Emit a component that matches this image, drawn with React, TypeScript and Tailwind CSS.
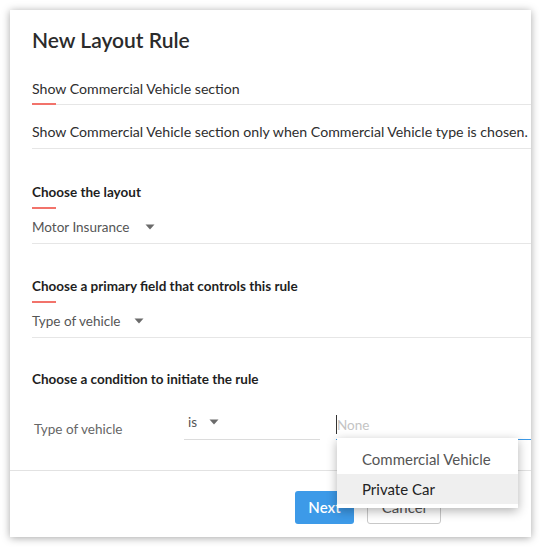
import React from "react";

const Caret = ({ ml = "ml-[15px]" }: { ml?: string }) => (
  <svg width="10" height="6" viewBox="0 0 10 6" className={`${ml} shrink-0`}>
    <path d="M0.5 0.5 H9.5 L5 5.5 Z" fill="#6b6b6b" />
  </svg>
);

const FieldLine = ({ red = true }: { red?: boolean }) => (
  <div className="flex items-end h-[2px]">
    {red && <div className="w-6 h-[2px] bg-[#f2736b]" />}
    <div className="flex-1 h-px bg-[#e6e6e6]" />
  </div>
);

const Heading = ({ children, mt }: { children: React.ReactNode; mt: string }) => (
  <div className={mt}>
    <div className="text-[13.5px] leading-5 font-bold text-[#1f1f1f]">{children}</div>
    <div className="mt-[5px] w-6 h-[2px] bg-[#f2736b]" />
  </div>
);

export default function App() {
  return (
    <div
      className="w-[540px] h-[547px] bg-white pt-[10px] pl-[10px] overflow-hidden"
      style={{ fontFamily: "Lato, 'Open Sans', sans-serif" }}
    >
      <div className="relative w-[521px] h-[527px] bg-white shadow-[0_1px_8px_rgba(0,0,0,0.35)] overflow-hidden flex flex-col">
        <div className="pl-[22px] flex-1 flex flex-col">
          <div className="pt-[16px] text-[21px] leading-7 font-semibold text-[#2b2b2b]">New Layout Rule</div>

          <div className="mt-[25px] text-[14.15px] leading-5 text-[#2e2e2e] whitespace-nowrap">Show Commercial Vehicle section</div>
          <div className="mt-[4px]"><FieldLine /></div>

          <div className="mt-[17px] text-[14.15px] leading-5 text-[#2e2e2e] whitespace-nowrap">
            Show Commercial Vehicle section only when Commercial Vehicle type is chosen.
          </div>
          <div className="mt-[5px]"><FieldLine red={false} /></div>

          <Heading mt="mt-[33px]">Choose the layout</Heading>
          <div className="mt-[8px] flex items-center text-[13.5px] leading-5 text-[#555]">
            Motor Insurance
            <Caret ml="ml-[15px]" />
          </div>
          <div className="mt-[5px]"><FieldLine red={false} /></div>

          <Heading mt="mt-[32px]">Choose a primary field that controls this rule</Heading>
          <div className="mt-[8px] flex items-center text-[13.5px] leading-5 text-[#555]">
            Type of vehicle
            <Caret ml="ml-[14px]" />
          </div>
          <div className="mt-[5px]"><FieldLine red={false} /></div>

          <div className="mt-[31px] text-[13.5px] leading-5 font-bold text-[#1f1f1f]">Choose a condition to initiate the rule</div>

          <div className="mt-[23px] flex items-start h-[28px]">
            <div className="w-[152px] pl-[2px] pt-[7px] text-[13.5px] leading-5 text-[#666]">Type of vehicle</div>
            <div className="w-[136px] h-[28px] border-b border-[#dcdcdc] pl-[4px]">
              <div className="flex items-center h-5 text-[13.5px] text-[#555]">
                is
                <Caret ml="ml-[12px]" />
              </div>
            </div>
            <div className="ml-[16px] flex-1 h-[28px] border-b border-[#3d9ae8] flex items-start pt-[3px]">
              <div className="w-px h-[19px] bg-[#333]" />
              <span className="text-[13.5px] leading-5 text-[#c4c4c4]">None</span>
            </div>
          </div>
          <div className="flex-1" />
        </div>

        <div className="h-px bg-[#e2e2e2] mb-[20px]" />
        <div className="flex pl-[285px] gap-[13px] mb-[13px]">
          <div className="w-[59px] h-[33px] rounded-[3px] bg-[#3d9ae8] text-white text-[15px] font-semibold flex items-center justify-center">
            Next
          </div>
          <div className="w-[74px] h-[33px] rounded-[3px] border border-[#c8c8c8] bg-white text-[#555] text-[15px] flex items-center justify-center">
            Cancel
          </div>
        </div>

        <div className="absolute left-[327px] top-[428px] w-[181px] h-[70px] bg-white shadow-[0_3px_10px_rgba(0,0,0,0.3)] pt-[6px]">
          <div className="h-[30px] pl-[25px] flex items-center text-[15px] text-[#555]">Commercial Vehicle</div>
          <div className="h-[30px] pl-[25px] flex items-center text-[15px] text-[#222] bg-[#efefef]">Private Car</div>
        </div>
      </div>
    </div>
  );
}
